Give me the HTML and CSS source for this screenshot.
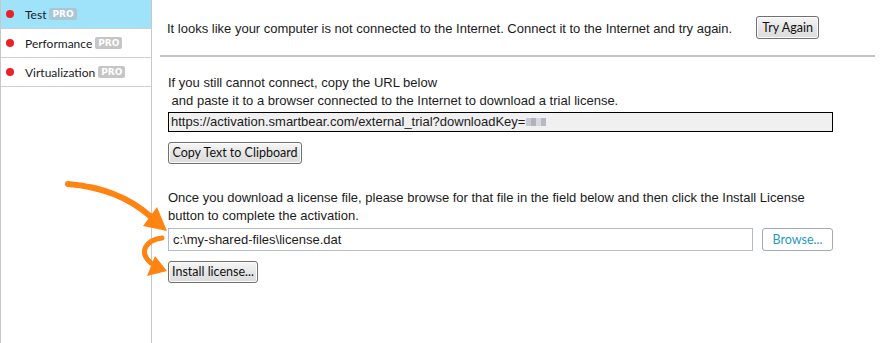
FILE: index.html
```html
<!DOCTYPE html>
<html>
<head>
<meta charset="utf-8">
<link rel="stylesheet" href="styles.css">
</head>
<body>
<div class="page">
  <aside class="sidebar">
    <div class="nav-item active"><span class="dot"></span><span class="label">Test</span><span class="pro">PRO</span></div>
    <div class="nav-item"><span class="dot"></span><span class="label">Performance</span><span class="pro">PRO</span></div>
    <div class="nav-item"><span class="dot"></span><span class="label">Virtualization</span><span class="pro">PRO</span></div>
  </aside>
  <main class="main">
    <section class="offline">
      <span class="msg">It looks like your computer is not connected to the Internet. Connect it to the Internet and try again.</span>
      <button class="btn try">Try Again</button>
    </section>
    <div class="rule"></div>
    <section class="block copy">
      <p class="txt">If you still cannot connect, copy the URL below<br>&nbsp;and paste it to a browser connected to the Internet to download a trial license.</p>
      <div class="url">https://activation.smartbear.com/external_trial?downloadKey=<span class="blur"><i></i><i></i><i></i><i></i></span></div>
      <button class="btn copybtn">Copy Text to Clipboard</button>
    </section>
    <section class="block install">
      <p class="txt">Once you download a license file, please browse for that file in the field below and then click the Install License<br>button to complete the activation.</p>
      <div class="filerow">
        <div class="file">c:\my-shared-files\license.dat</div>
        <button class="browse">Browse...</button>
      </div>
      <button class="btn installbtn">Install license...</button>
    </section>
  </main>
</div>
<svg class="arrows" width="882" height="343" viewBox="0 0 882 343">
  <path d="M68,184 Q118,188 150,216" fill="none" stroke="#ff8412" stroke-width="6" stroke-linecap="round"/>
  <polygon points="167,231 143,226 157,207" fill="#ff8412"/>
  <path d="M162,238 C146,240 138,252 151,263" fill="none" stroke="#ff8412" stroke-width="5" stroke-linecap="round"/>
  <polygon points="167,271 155,256 147,276" fill="#ff8412"/>
</svg>
</body>
</html>
```
FILE: styles.css
```css
html, body {
  margin: 0;
  padding: 0;
  background: #fff;
}
body {
  width: 882px;
  height: 343px;
  overflow: hidden;
  position: relative;
  font-family: "Liberation Sans", Arial, sans-serif;
  font-size: 13px;
  color: #1b1b1b;
}
.page {
  display: flex;
  height: 343px;
}
.sidebar {
  width: 150px;
  border-left: 1px solid #c8c8c8;
  border-right: 1px solid #c8c8c8;
  flex: none;
}
.nav-item {
  height: 28px;
  border-bottom: 1px solid #cfcfcf;
  display: flex;
  align-items: center;
  font-family: Lato, "Noto Sans", sans-serif;
  font-size: 12px;
  color: #1a1a28;
}
.nav-item.active {
  background: #9fe3fb;
}
.dot {
  width: 8px;
  height: 8px;
  border-radius: 50%;
  background: #ec2027;
  margin-left: 5px;
  margin-right: 11px;
  margin-top: -1px;
}
.pro {
  margin-left: 3px;
  background: #c6c6c6;
  color: #fff;
  font-family: "DejaVu Sans", sans-serif;
  font-weight: bold;
  font-size: 9px;
  line-height: 12px;
  padding: 0 3px;
  border-radius: 2px;
}
.active .pro {
  background: #a8c7d3;
}
.main {
  flex: 1;
  display: flex;
  flex-direction: column;
}
.offline {
  height: 55px;
  display: flex;
  align-items: center;
  padding-left: 15px;
}
.msg {
  margin-top: 1px;
  white-space: nowrap;
}
.btn {
  font-family: Lato, "Noto Sans", sans-serif;
  font-size: 12px;
  color: #111;
  height: 22px;
  padding: 0;
  border: 1px solid #707070;
  border-radius: 3px;
  background: linear-gradient(#f6f6f6, #e6e6e6 50%, #dcdcdc);
  box-shadow: inset 0 0 0 1px #fcfcfc;
  line-height: 18px;
  white-space: nowrap;
  text-align: center;
}
.try {
  margin-left: 24px;
  height: 23px;
  width: 63px;
  flex: none;
  font-size: 12.5px;
}
.rule {
  height: 2px;
  background: #c4c4c4;
  margin: 0 7px 0 8px;
}
.block {
  padding-left: 16px;
  padding-right: 49px;
  display: flex;
  flex-direction: column;
  align-items: flex-start;
}
.txt {
  margin: 0;
  line-height: 18px;
}
.copy {
  padding-top: 17px;
}
.url {
  align-self: stretch;
  margin-top: 2px;
  height: 18px;
  line-height: 18px;
  border: 1px solid #000;
  background: #f0f0f0;
  padding-left: 2px;
  white-space: nowrap;
  overflow: hidden;
  display: flex;
  align-items: center;
}
.blur {
  display: inline-flex;
  height: 8px;
  margin-left: 1px;
}
.blur i {
  width: 5px;
  height: 8px;
  background: #c9c9d2;
}
.blur i:nth-child(2) { background: #b2b2be; }
.blur i:nth-child(3) { background: #d8d8de; }
.blur i:nth-child(4) { background: #b8b8c4; }
.copybtn {
  margin-top: 10px;
  width: 134px;
  font-size: 12.5px;
}
.install {
  padding-top: 25px;
}
.filerow {
  align-self: stretch;
  margin-top: 3px;
  display: flex;
  gap: 9px;
}
.file {
  flex: 1;
  height: 21px;
  line-height: 21px;
  border: 1px solid #b4bccb;
  padding-left: 4px;
}
.browse {
  width: 71px;
  height: 23px;
  border: 1px solid #a4aab2;
  border-radius: 3px;
  background: #fff;
  color: #1f9ac2;
  font-family: Lato, "Noto Sans", sans-serif;
  font-size: 12.5px;
  padding: 0;
  white-space: nowrap;
}
.installbtn {
  margin-top: 10px;
  width: 90px;
  font-size: 12.5px;
}
.arrows {
  position: absolute;
  left: 0;
  top: 0;
  pointer-events: none;
}
```
